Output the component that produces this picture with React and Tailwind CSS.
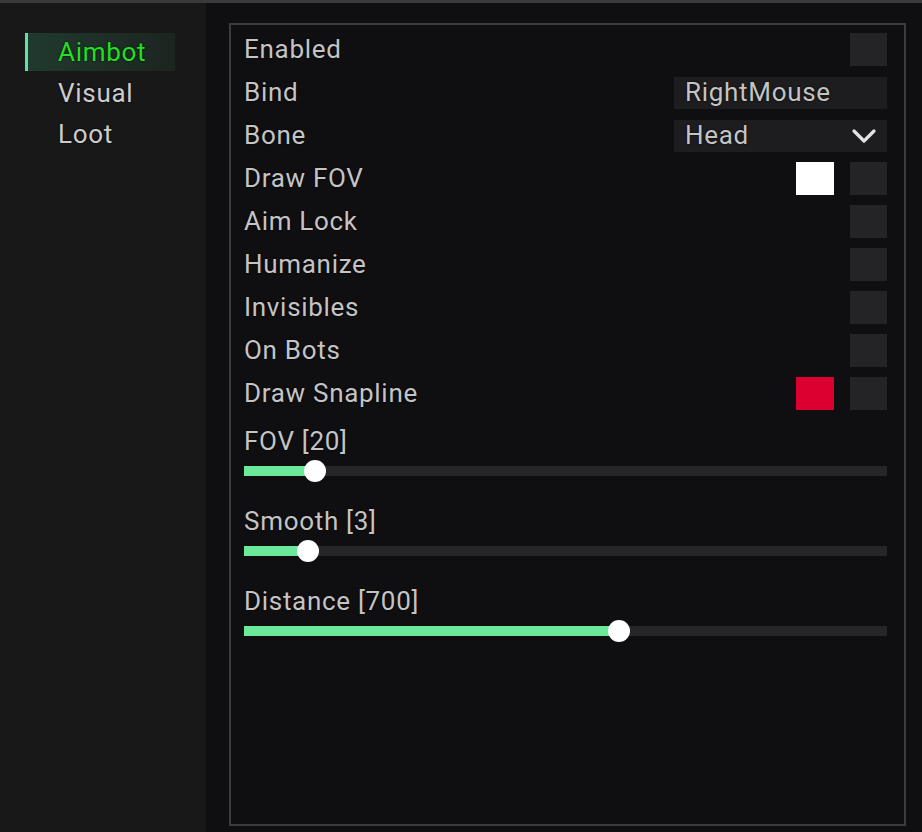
import React, { useState } from 'react';

const toggles = [
    { label: 'Enabled' },
    { label: 'Bind', kind: 'bind', value: 'RightMouse' },
    { label: 'Bone', kind: 'select', value: 'Head' },
    { label: 'Draw FOV', color: 'bg-white' },
    { label: 'Aim Lock' },
    { label: 'Humanize' },
    { label: 'Invisibles' },
    { label: 'On Bots' },
    { label: 'Draw Snapline', color: 'bg-[#dc0030]' },
];

const sliders = [
    { label: 'FOV', value: 20, max: 180 },
    { label: 'Smooth', value: 3, max: 30 },
    { label: 'Distance', value: 700, max: 1200 },
];

function Chevron() {
    return (
        <svg width="26" height="18" viewBox="0 0 26 18" fill="none">
            <path d="M3 4 L13 14 L23 4" stroke="#e2e2e2" strokeWidth="3.2" strokeLinecap="round" strokeLinejoin="round" />
        </svg>
    );
}

function Row({ item }) {
    return (
        <div className="h-[43px] flex items-center">
            <span className="flex-1 text-[#c4c4c4] -mt-[2px]">{item.label}</span>
            {item.kind == 'bind' && (
                <div className="w-[213px] h-[32px] bg-[#1d1d1f] pl-[11px] flex items-center text-[#c4c4c4]">
                    <span className="-mt-[2px]">{item.value}</span>
                </div>
            )}
            {item.kind == 'select' && (
                <div className="w-[213px] h-[32px] bg-[#1d1d1f] pl-[11px] pr-[10px] flex items-center justify-between text-[#c4c4c4]">
                    <span className="-mt-[2px]">{item.value}</span>
                    <Chevron />
                </div>
            )}
            {!item.kind && item.color && <div className={`w-[38px] h-[33px] mr-[16px] ${item.color}`}></div>}
            {!item.kind && <div className="w-[37px] h-[33px] bg-[#242426]"></div>}
        </div>
    );
}

function Slider({ s }) {
    const pct = (s.value / s.max) * 100;
    return (
        <div className="pb-[30px]">
            <div className="h-[30px] flex items-center text-[#c4c4c4]">{s.label} [{s.value}]</div>
            <div className="mt-[10px] h-[10px] bg-[#262628] relative">
                <div className="h-full bg-[#6be89a]" style={{ width: `${pct}%` }}></div>
                <div className="absolute top-1/2 -translate-y-1/2 -translate-x-1/2 w-[22px] h-[22px] rounded-full bg-white" style={{ left: `${pct}%` }}></div>
            </div>
        </div>
    );
}

export default function App() {
    const [tab, setTab] = useState('Aimbot');

    return (
        <div className="w-[922px] h-[832px] bg-[#0f0e10] flex flex-col overflow-hidden text-[26px] leading-none tracking-[0.7px] [text-shadow:0_0_2px_#000]" style={{ fontFamily: 'Roboto, "Noto Sans", sans-serif' }}>
            <div className="h-[3px] bg-[#3a3a3c]"></div>
            <div className="flex-1 flex">
                <aside className="w-[206px] bg-[#181818] pt-[30px] pl-[25px] flex flex-col gap-[3px]">
                    {['Aimbot', 'Visual', 'Loot'].map((t) => (
                        <div key={t} onClick={() => setTab(t)}
                            className={`w-[150px] h-[38px] flex items-center pl-[33px] cursor-pointer relative ${tab == t ? 'bg-gradient-to-r from-[#203a2e] to-[#1c2520] text-[#22e022]' : 'text-[#cdcdcd]'}`}>
                            {tab == t && <span className="absolute left-0 top-0 bottom-0 w-[3px] bg-[#5ee3a0]"></span>}
                            {t}
                        </div>
                    ))}
                </aside>
                <main className="flex-1 pl-[23px] pr-[16px] pt-[20px] pb-[6px]">
                    <div className="h-full border-2 border-[#3c3c3e] pl-[13px] pr-[17px] pt-[3px]">
                        {toggles.map((t) => <Row key={t.label} item={t} />)}
                        <div className="mt-[11px]">
                            {sliders.map((s) => <Slider key={s.label} s={s} />)}
                        </div>
                    </div>
                </main>
            </div>
        </div>
    );
}
